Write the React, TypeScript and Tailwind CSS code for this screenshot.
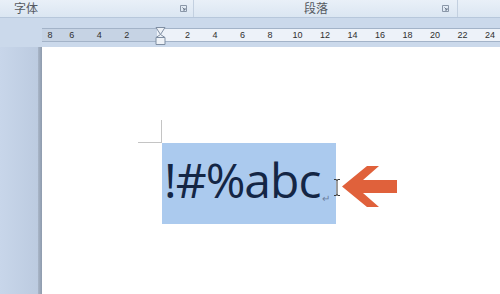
import React from 'react';

const leftNums = ['8', '6', '4', '2'];
const rightNums = ['2', '4', '6', '8', '10', '12', '14', '16', '18', '20', '22', '24'];

function Launcher() {
  return (
    <svg width="7" height="7" viewBox="0 0 7 7" className="shrink-0">
      <path d="M0.5 0.5 H6.5 V6.5 H0.5 Z" fill="none" stroke="#8a97a8" strokeWidth="1" />
      <path d="M2.5 2.5 L5 5 M5 3 V5 H3" fill="none" stroke="#6d7a8c" strokeWidth="1" />
    </svg>
  );
}

function IndentMarker() {
  return (
    <svg width="11" height="18" viewBox="0 0 11 18">
      <path d="M1 0.5 H10 L5.5 7.5 Z" fill="#eef2f7" stroke="#7f8ea2" strokeWidth="1" />
      <path d="M5.5 7.5 L10 10.5 V17.5 H1 V10.5 Z" fill="#eef2f7" stroke="#7f8ea2" strokeWidth="1" />
      <path d="M1 10.5 H10" stroke="#7f8ea2" strokeWidth="1" />
    </svg>
  );
}

export default function App() {
  return (
    <div className="w-[500px] h-[294px] overflow-hidden flex flex-col bg-[#cbd9eb] font-['Liberation_Sans','Noto_Sans_CJK_SC',sans-serif]">
      {/* Ribbon group labels */}
      <div className="h-[18px] flex bg-gradient-to-b from-[#e9f0f8] to-[#dbe6f2] border-b border-[#b7c7db] text-[12px] text-[#555a62]">
        <div className="w-[194px] flex items-center justify-between pl-[14px] pr-[6px] border-r border-[#c3d0e0]">
          <span className="leading-none">字体</span>
          <Launcher />
        </div>
        <div className="w-[264px] flex items-center justify-between pl-[110px] pr-[8px] border-r border-[#c3d0e0]">
          <span className="leading-none">段落</span>
          <Launcher />
        </div>
        <div className="flex-1" />
      </div>

      {/* Ruler */}
      <div className="pt-[10px] pb-[5px] pl-[42px]">
        <div className="relative h-[14px] flex border-y border-[#a3b3c8] text-[9px] text-[#2f2f2f] leading-none">
          <div className="w-[115px] shrink-0 flex items-center bg-[#c6d3e4]">
            {leftNums.map((n, i) => (
              <span key={i} className={`${i === 0 ? 'w-[16px]' : 'w-[27.5px]'} shrink-0 text-center`}>
                {n}
              </span>
            ))}
          </div>
          <div className="flex-1 flex bg-[#edf2f9] pl-[16.75px] overflow-hidden">
            {rightNums.map((n) => (
              <span key={n} className="w-[27.5px] shrink-0 flex flex-col items-center justify-between pt-[2px] pb-[1px]">
                <span>{n}</span>
                <span className="w-px h-[2px] bg-[#333]" />
              </span>
            ))}
          </div>
          <div className="absolute left-[113px] -top-[2px]">
            <IndentMarker />
          </div>
        </div>
      </div>

      {/* Page area */}
      <div className="flex-1 flex">
        <div className="w-[38px] bg-gradient-to-r from-[#c8d6ea] to-[#bccbe0]" />
        <div className="w-[4px] bg-gradient-to-r from-[#a9b6c8] to-[#8e9bad]" />
        <div className="flex-1 bg-white flex flex-col pt-[73px]">
          {/* crop mark */}
          <div className="ml-[96px] w-[24px] h-[23px] border-r border-b border-[#c4c4c4]" />
          <div className="flex items-start">
            <div className="ml-[120px] w-[174px] h-[81px] bg-[#abcaee] flex items-start pt-[13px] pl-[2px] font-['Open_Sans',sans-serif] text-[#142645]">
              <span className="text-[48px] leading-none tracking-[-1px]">!#%abc</span>
              <span className="text-[10px] leading-none text-[#6b7f9e] mt-[37px] ml-[2px]">↵</span>
            </div>
            <svg width="8" height="17" viewBox="0 0 8 17" className="-ml-[3px] mt-[36px]">
              <path d="M1 0.5 H3 Q4 0.5 4 2 V15 Q4 16.5 3 16.5 H1 M7 0.5 H5 Q4 0.5 4 2 M4 15 Q4 16.5 5 16.5 H7" fill="none" stroke="#3a3a3a" strokeWidth="1" />
            </svg>
            <svg width="56" height="42" viewBox="0 0 56 42" className="ml-[1px] mt-[23px]">
              <path d="M0 20.5 L25 0 H37 L21 14 H55 V27 H21 L37 41 H25 Z" fill="#e0613b" />
            </svg>
          </div>
        </div>
      </div>
    </div>
  );
}
